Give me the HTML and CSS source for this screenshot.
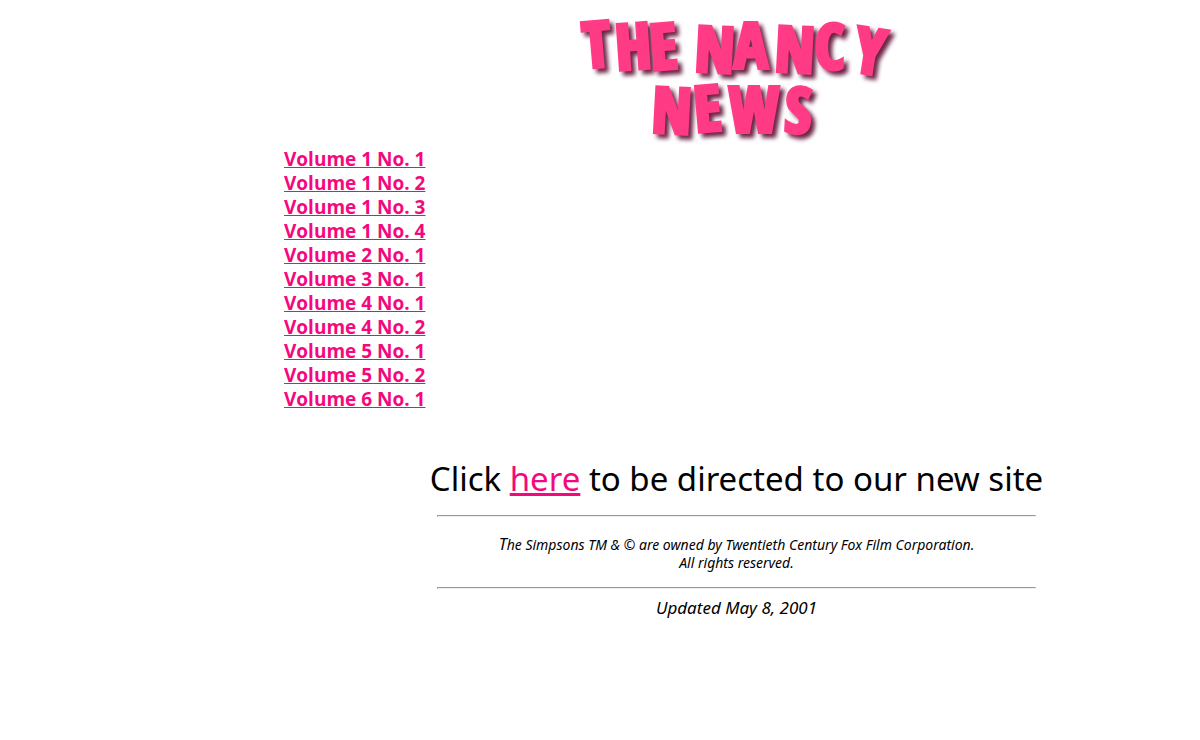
FILE: index.html
```html
<!DOCTYPE html>
<html lang="en">
<head>
<meta charset="utf-8">
<title>The Nancy News</title>
<link rel="stylesheet" href="styles.css">
</head>
<body>
<main class="content">
  <h1 class="masthead">
    <svg class="logo" viewBox="0 0 324 136" role="img" aria-label="The Nancy News">
      <g class="logo-text">
        <text y="57 59 59" x="10 42 77" rotate="-5 -4 -5">THE</text>
        <text y="60 57 60 58 60" x="119 159 199 240 277" rotate="3 0 3 0 9">NANCY</text>
        <text y="121 121 121 121" x="76 121 154 209" rotate="3 -5 0 3">NEWS</text>
      </g>
    </svg>
  </h1>
  <nav class="issues">
    <a href="#">Volume 1 No. 1</a>
    <a href="#">Volume 1 No. 2</a>
    <a href="#">Volume 1 No. 3</a>
    <a href="#">Volume 1 No. 4</a>
    <a href="#">Volume 2 No. 1</a>
    <a href="#">Volume 3 No. 1</a>
    <a href="#">Volume 4 No. 1</a>
    <a href="#">Volume 4 No. 2</a>
    <a href="#">Volume 5 No. 1</a>
    <a href="#">Volume 5 No. 2</a>
    <a href="#">Volume 6 No. 1</a>
  </nav>
  <p class="redirect">Click <a href="#">here</a> to be directed to our new site</p>
  <hr class="rule">
  <p class="legal"><span class="initial">T</span>he Simpsons TM &amp; © are owned by Twentieth Century Fox Film Corporation.<br>All rights reserved.</p>
  <hr class="rule">
  <p class="updated">Updated May 8, 2001</p>
</main>
</body>
</html>
```
FILE: styles.css
```css
body {
  margin: 8px;
  background: #fff;
  color: #000;
  font-family: "Noto Sans", "Open Sans", sans-serif;
}

a {
  color: #f5087e;
}

.content {
  margin-left: 273px;
  padding: 3px;
  text-align: center;
}

.masthead {
  margin: 0;
  line-height: 0;
}

.logo {
  width: 324px;
  max-width: 100%;
  overflow: visible;
}

.logo-text {
  fill: #ff3b85;
  stroke: #ff3b85;
  stroke-width: 4px;
  font-family: "Liberation Sans Narrow", "Open Sans Condensed", "Liberation Sans", sans-serif;
  font-size: 63px;
  font-weight: 700;
  filter: drop-shadow(4px 4px 2px #6b2445);
}

.issues {
  display: flex;
  flex-direction: column;
  align-items: flex-start;
  font-family: "Open Sans", "Noto Sans", sans-serif;
  font-size: 19px;
  font-weight: 700;
  line-height: 24px;
}

.issues a {
  text-decoration-thickness: 1px;
}

.redirect {
  margin: 44px 0 12px;
  font-size: 33px;
  line-height: 48px;
}

.redirect a {
  text-decoration-thickness: 3px;
}

.rule {
  width: 66%;
  margin: 0 auto;
}

.legal {
  margin: 18px 0 15px;
  font-size: 14px;
  font-style: italic;
  line-height: 18px;
}

.initial {
  font-size: 16px;
}

.updated {
  margin: 7px 0;
  font-size: 17px;
  font-style: italic;
  line-height: 24px;
}
```
